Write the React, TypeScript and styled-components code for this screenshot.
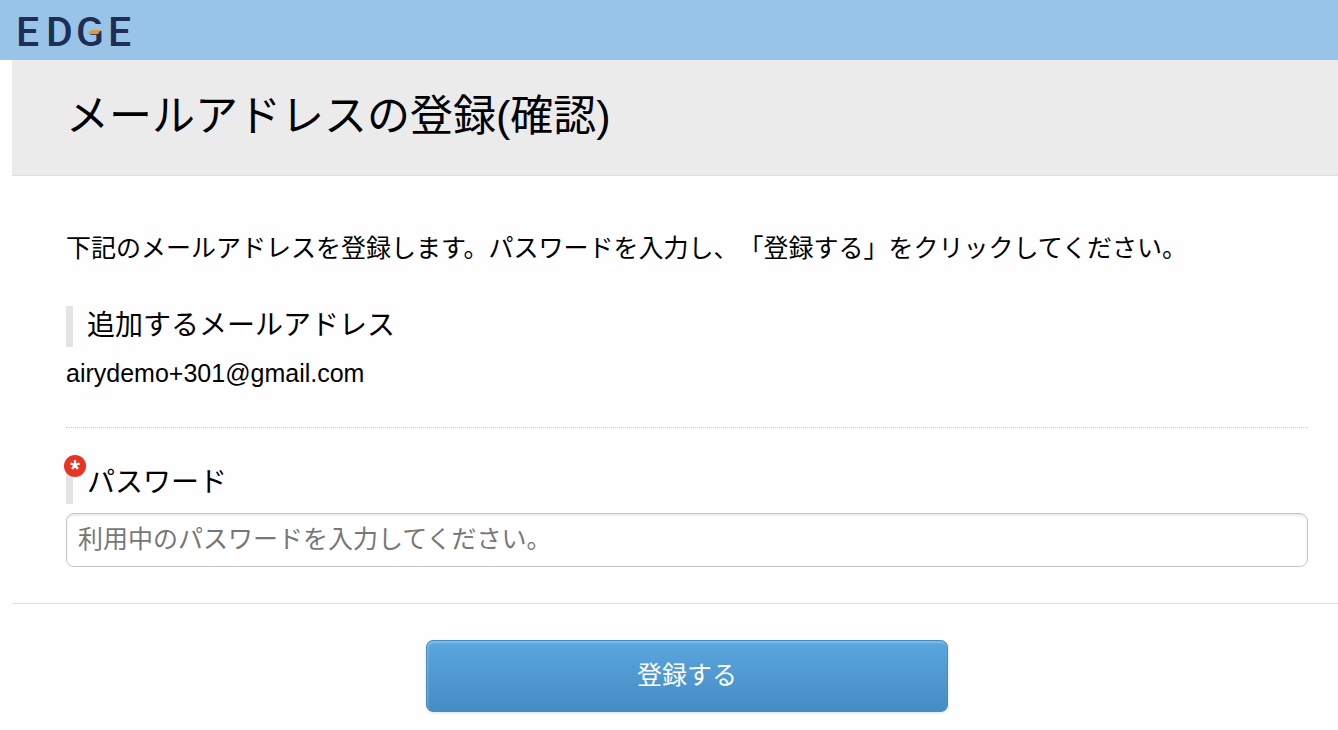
import React from "react";
import styled, { createGlobalStyle } from "styled-components";

const GlobalStyle = createGlobalStyle`
  *, *::before, *::after { box-sizing: border-box; }
  body {
    margin: 0;
    background: #fefefe;
    color: #000;
    font-family: "Liberation Sans", "Noto Sans CJK JP", sans-serif;
    font-size: 25px;
    line-height: 36px;
    text-spacing-trim: space-all;
  }
`;

const Header = styled.header`
  display: flex;
  align-items: center;
  height: 60px;
  padding-left: 16px;
  background: #98c5e7;
`;

const LogoLink = styled.a`
  display: block;
  height: 60px;
  svg { display: block; }
  text {
    font-family: Roboto, "Liberation Sans", sans-serif;
    font-size: 41px;
    font-weight: 500;
    fill: #202d56;
  }
`;

const Page = styled.main`
  margin-left: 12px;
`;

const TitleBar = styled.div`
  padding: 24px 54px 27px;
  background: #ebebeb;
  border-bottom: 1px solid #dfdfdf;
`;

const Title = styled.h1`
  margin: 0;
  font-size: 43px;
  font-weight: 400;
  line-height: 64px;
`;

const Content = styled.div`
  padding: 54px 30px 36px 54px;
`;

const Lead = styled.p`
  margin: 0;
`;

const Section = styled.section<{ $divided?: boolean }>`
  padding: ${(p) => (p.$divided ? "35px 0 0" : "40px 0 36px")};
  border-top: ${(p) => (p.$divided ? "1px dotted #ccc" : "0")};
`;

const markerStyle = `
  display: block;
  position: relative;
  margin: 0;
  padding: 0 0 1px 14px;
  border-left: 7px solid #e3e3e3;
  font-size: 28px;
  font-weight: 400;
  line-height: 40px;
`;

const Heading = styled.h2`${markerStyle}`;
const FieldLabel = styled.label`${markerStyle}`;

const RequiredBadge = styled.span`
  position: absolute;
  top: -8px;
  left: -9px;
  width: 22px;
  height: 22px;
  border-radius: 50%;
  background: #e93323;
  svg { display: block; }
`;

const Email = styled.p`
  margin: 8px 0 0;
`;

const PasswordInput = styled.input`
  display: block;
  width: 100%;
  height: 54px;
  margin-top: 9px;
  padding: 0 11px 2px;
  border: 1px solid #c6c6c6;
  border-radius: 8px;
  background: #fff;
  box-shadow: inset 0 2px 2px rgba(0, 0, 0, 0.08);
  font: inherit;
  &::placeholder { color: #777; opacity: 1; }
`;

const Actions = styled.div`
  display: flex;
  justify-content: center;
  padding: 36px 30px 18px 54px;
  border-top: 1px solid #dfdfdf;
`;

const SubmitButton = styled.button`
  width: 42%;
  height: 72px;
  padding: 0 0 3px;
  border: 1px solid #428dc4;
  border-radius: 7px;
  background: linear-gradient(#5ba6df, #448dc3);
  box-shadow: inset 1px 2px 2px rgba(255, 255, 255, 0.25), 0 1px 3px rgba(0, 0, 0, 0.12);
  color: #fff;
  font: inherit;
  cursor: pointer;
`;

export default function App() {
  return (
    <>
      <GlobalStyle />
      <Header>
        <LogoLink href="#" aria-label="EDGE">
          <svg width="130" height="60" viewBox="0 0 130 60">
            <text x="0 30 60 92" y="46">EDGE</text>
            <path d="M78 24H88V29H78Z" fill="#98c5e7" />
            <path d="M71 34L76 30H85L82 34Z" fill="#e09a3e" />
          </svg>
        </LogoLink>
      </Header>
      <Page>
        <TitleBar>
          <Title>メールアドレスの登録(確認)</Title>
        </TitleBar>
        <form onSubmit={(e) => e.preventDefault()}>
          <Content>
            <Lead>
              下記のメールアドレスを登録します。パスワードを入力し、「登録する」をクリックしてください。
            </Lead>
            <Section>
              <Heading>追加するメールアドレス</Heading>
              <Email>airydemo+301@gmail.com</Email>
            </Section>
            <Section $divided>
              <FieldLabel htmlFor="password">
                パスワード
                <RequiredBadge aria-hidden="true">
                  <svg width="22" height="22" viewBox="0 0 22 22">
                    <path
                      d="M11 10V5M11 10L15.6 8.5M11 10L13.9 14M11 10L8.1 14M11 10L6.4 8.5"
                      stroke="#fff"
                      strokeWidth="2.3"
                    />
                  </svg>
                </RequiredBadge>
              </FieldLabel>
              <PasswordInput
                id="password"
                type="password"
                required
                placeholder="利用中のパスワードを入力してください。"
              />
            </Section>
          </Content>
          <Actions>
            <SubmitButton type="submit">登録する</SubmitButton>
          </Actions>
        </form>
      </Page>
    </>
  );
}
